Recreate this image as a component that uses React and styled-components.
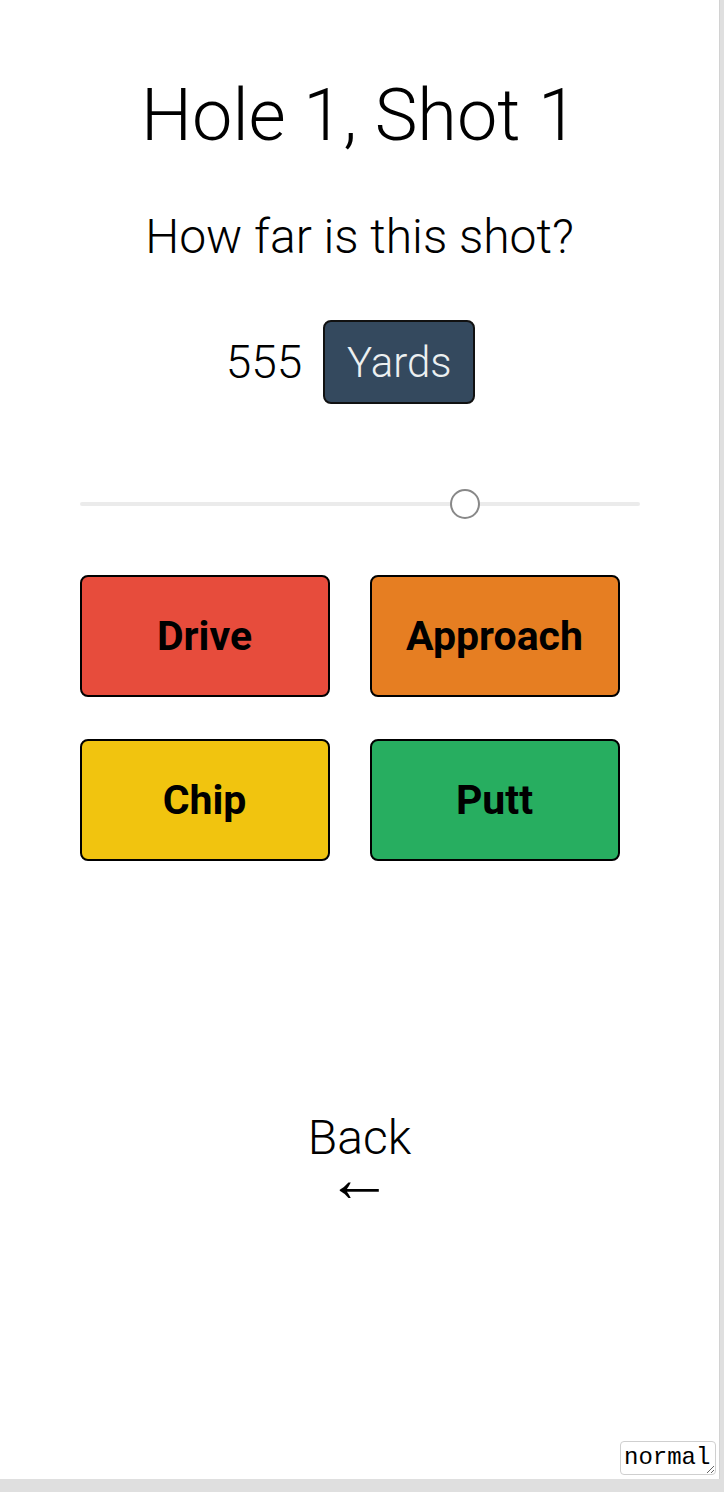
import React, { useState } from "react";
import styled, { createGlobalStyle } from "styled-components";

const GlobalStyle = createGlobalStyle`
    html, body {
        margin: 0;
        padding: 0;
        background: #dfdfdf;
    }
    body {
        font-family: Roboto, "Liberation Sans", sans-serif;
    }
`;

const Frame = styled.div`
    position: relative;
    box-sizing: border-box;
    width: 720px;
    height: 1479px;
    background: #ffffff;
    border-right: 1px solid #d2d2d2;
    display: flex;
    flex-direction: column;
    align-items: center;
    color: #000;
`;

const Title = styled.h1`
    margin: 80px 0 0 0;
    font-size: 72px;
    line-height: 72px;
    font-weight: 300;
`;

const Question = styled.h2`
    margin: 61px 0 0 0;
    font-size: 48px;
    line-height: 48px;
    font-weight: 300;
`;

const DistanceRow = styled.div`
    margin-top: 59px;
    padding-right: 18px;
    display: flex;
    align-items: center;
    gap: 21px;
    height: 84px;
`;

const Distance = styled.span`
    font-size: 46px;
    font-weight: 300;
    line-height: 46px;
`;

const UnitButton = styled.button`
    box-sizing: border-box;
    width: 152px;
    height: 84px;
    border: 2px solid #111;
    border-radius: 8px;
    background: #34495e;
    color: #ecf0f1;
    font-family: Roboto, "Liberation Sans", sans-serif;
    font-size: 42px;
    font-weight: 300;
    padding: 0;
`;

const Slider = styled.input`
    -webkit-appearance: none;
    appearance: none;
    width: 560px;
    height: 30px;
    margin: 85px 0 0 0;
    background: transparent;

    &::-webkit-slider-runnable-track {
        height: 4px;
        border-radius: 2px;
        background: #ebebeb;
    }
    &::-webkit-slider-thumb {
        -webkit-appearance: none;
        box-sizing: border-box;
        width: 30px;
        height: 30px;
        margin-top: -13px;
        border-radius: 50%;
        border: 2px solid #888;
        background: #fff;
    }
`;

const ShotGrid = styled.div`
    margin-top: 56px;
    width: 560px;
    display: grid;
    grid-template-columns: 250px 250px;
    column-gap: 40px;
    row-gap: 42px;
`;

const ShotButton = styled.button`
    box-sizing: border-box;
    height: 122px;
    border: 2px solid #000;
    border-radius: 8px;
    background: ${(p) => p.color};
    color: #000;
    font-family: Roboto, "Liberation Sans", sans-serif;
    font-size: 41px;
    font-weight: 700;
    padding: 0;
`;

const BackLink = styled.div`
    margin-top: 253px;
    display: flex;
    flex-direction: column;
    align-items: center;
    font-size: 48px;
    font-weight: 300;
    line-height: 48px;
`;

const Arrow = styled.span`
    font-family: "Liberation Sans", sans-serif;
    font-size: 66px;
    font-weight: 300;
    line-height: 32px;
`;

const ModeBox = styled.textarea`
    position: absolute;
    right: 3px;
    bottom: 4px;
    box-sizing: border-box;
    width: 96px;
    height: 34px;
    padding: 1px 3px;
    border: 1px solid #cfcfcf;
    border-radius: 4px;
    font-family: "Liberation Mono", monospace;
    font-size: 24px;
    line-height: 30px;
    color: #000;
    overflow: hidden;
    resize: both;
`;

const shots = [
    { label: "Drive", color: "#e74c3c" },
    { label: "Approach", color: "#e67e22" },
    { label: "Chip", color: "#f1c40f" },
    { label: "Putt", color: "#27ae60" },
];

const App = () => {
    const [yards, setYards] = useState(555);
    return (
        <>
            <GlobalStyle />
            <Frame>
                <Title>Hole 1, Shot 1</Title>
                <Question>How far is this shot?</Question>
                <DistanceRow>
                    <Distance>{yards}</Distance>
                    <UnitButton>Yards</UnitButton>
                </DistanceRow>
                <Slider
                    type="range"
                    min={0}
                    max={793}
                    value={yards}
                    onChange={(e) => setYards(Number(e.target.value))}
                />
                <ShotGrid>
                    {shots.map((s) => (
                        <ShotButton key={s.label} color={s.color}>
                            {s.label}
                        </ShotButton>
                    ))}
                </ShotGrid>
                <BackLink>
                    <span>Back</span>
                    <Arrow>←</Arrow>
                </BackLink>
                <ModeBox defaultValue="normal" spellCheck={false} />
            </Frame>
        </>
    );
};

export default App;
